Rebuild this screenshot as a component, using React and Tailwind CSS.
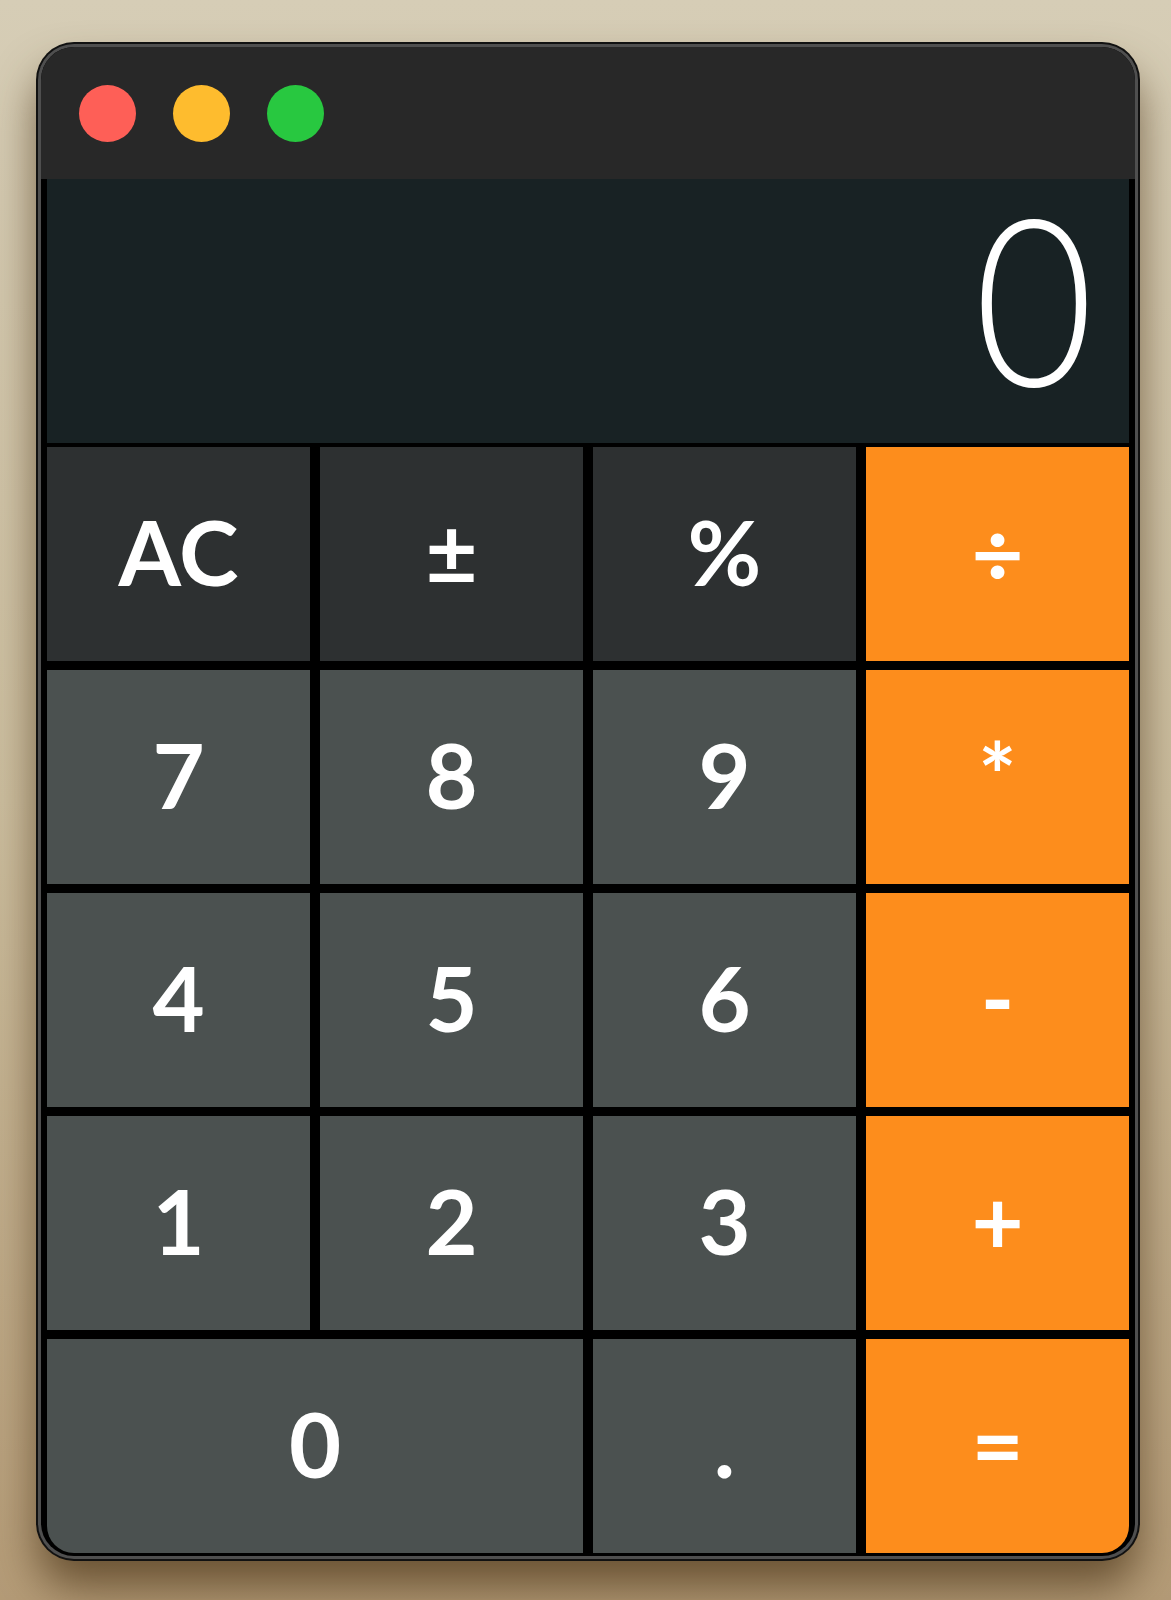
import { useState } from 'react';

const KEYS = [
  { label: 'AC', kind: 'fn' },
  { label: '±', kind: 'fn' },
  { label: '%', kind: 'fn' },
  { label: '÷', kind: 'op' },
  { label: '7', kind: 'num' },
  { label: '8', kind: 'num' },
  { label: '9', kind: 'num' },
  { label: '*', kind: 'op' },
  { label: '4', kind: 'num' },
  { label: '5', kind: 'num' },
  { label: '6', kind: 'num' },
  { label: '-', kind: 'op' },
  { label: '1', kind: 'num' },
  { label: '2', kind: 'num' },
  { label: '3', kind: 'num' },
  { label: '+', kind: 'op' },
  { label: '0', kind: 'num', wide: true, corner: 'rounded-bl-[27px]' },
  { label: '.', kind: 'num' },
  { label: '=', kind: 'op', corner: 'rounded-br-[27px]' },
];

const KIND_BG = {
  fn: 'bg-[#2d3031]',
  num: 'bg-[#4b5150]',
  op: 'bg-[#fd8d1c]',
};

export default function App() {
  const [display, setDisplay] = useState('0');

  const press = (label) => {
    if (label === 'AC') return setDisplay('0');
    if (/[0-9]/.test(label)) setDisplay((d) => (d === '0' ? label : d + label));
  };

  return (
    <div className="min-h-screen w-full bg-gradient-to-b from-[#d6cdb6] via-[#cbbd9e] to-[#b49b77] pt-[44px] pl-[38px] font-[Lato,sans-serif]">
      {/* Window frame */}
      <div className="w-[1100px] rounded-[36px] bg-[#4f4f4f] p-[3px] ring-2 ring-[#111] shadow-[0_28px_44px_rgba(80,58,28,0.75)]">
        <div className="rounded-[33px] overflow-hidden bg-black">
          {/* Title bar */}
          <div className="h-[132px] bg-[#282828] flex items-center pl-[38px] gap-[37px]">
            <span className="w-[57px] h-[57px] rounded-full bg-[#fe5f57]" />
            <span className="w-[57px] h-[57px] rounded-full bg-[#febc2e]" />
            <span className="w-[57px] h-[57px] rounded-full bg-[#28c840]" />
          </div>

          <div className="px-[6px] pb-[3px]">
            {/* Display */}
            <div className="h-[264px] bg-[#182224] flex items-center justify-end pr-[35px] pb-[30px]">
              <span className="text-white text-[234px] font-light leading-none scale-x-[0.88] origin-right">{display}</span>
            </div>

            {/* Keypad */}
            <div className="mt-[4px] grid grid-cols-4 gap-x-[10px] gap-y-[9px]">
              {KEYS.map((k) => (
                <button
                  key={k.label}
                  onClick={() => press(k.label)}
                  className={`h-[214px] flex items-center justify-center pb-[6px] text-white text-[90px] font-bold leading-none ${KIND_BG[k.kind]} ${k.wide ? 'col-span-2' : ''} ${k.corner || ''}`}
                >
                  {k.label}
                </button>
              ))}
            </div>
          </div>
        </div>
      </div>
    </div>
  );
}
